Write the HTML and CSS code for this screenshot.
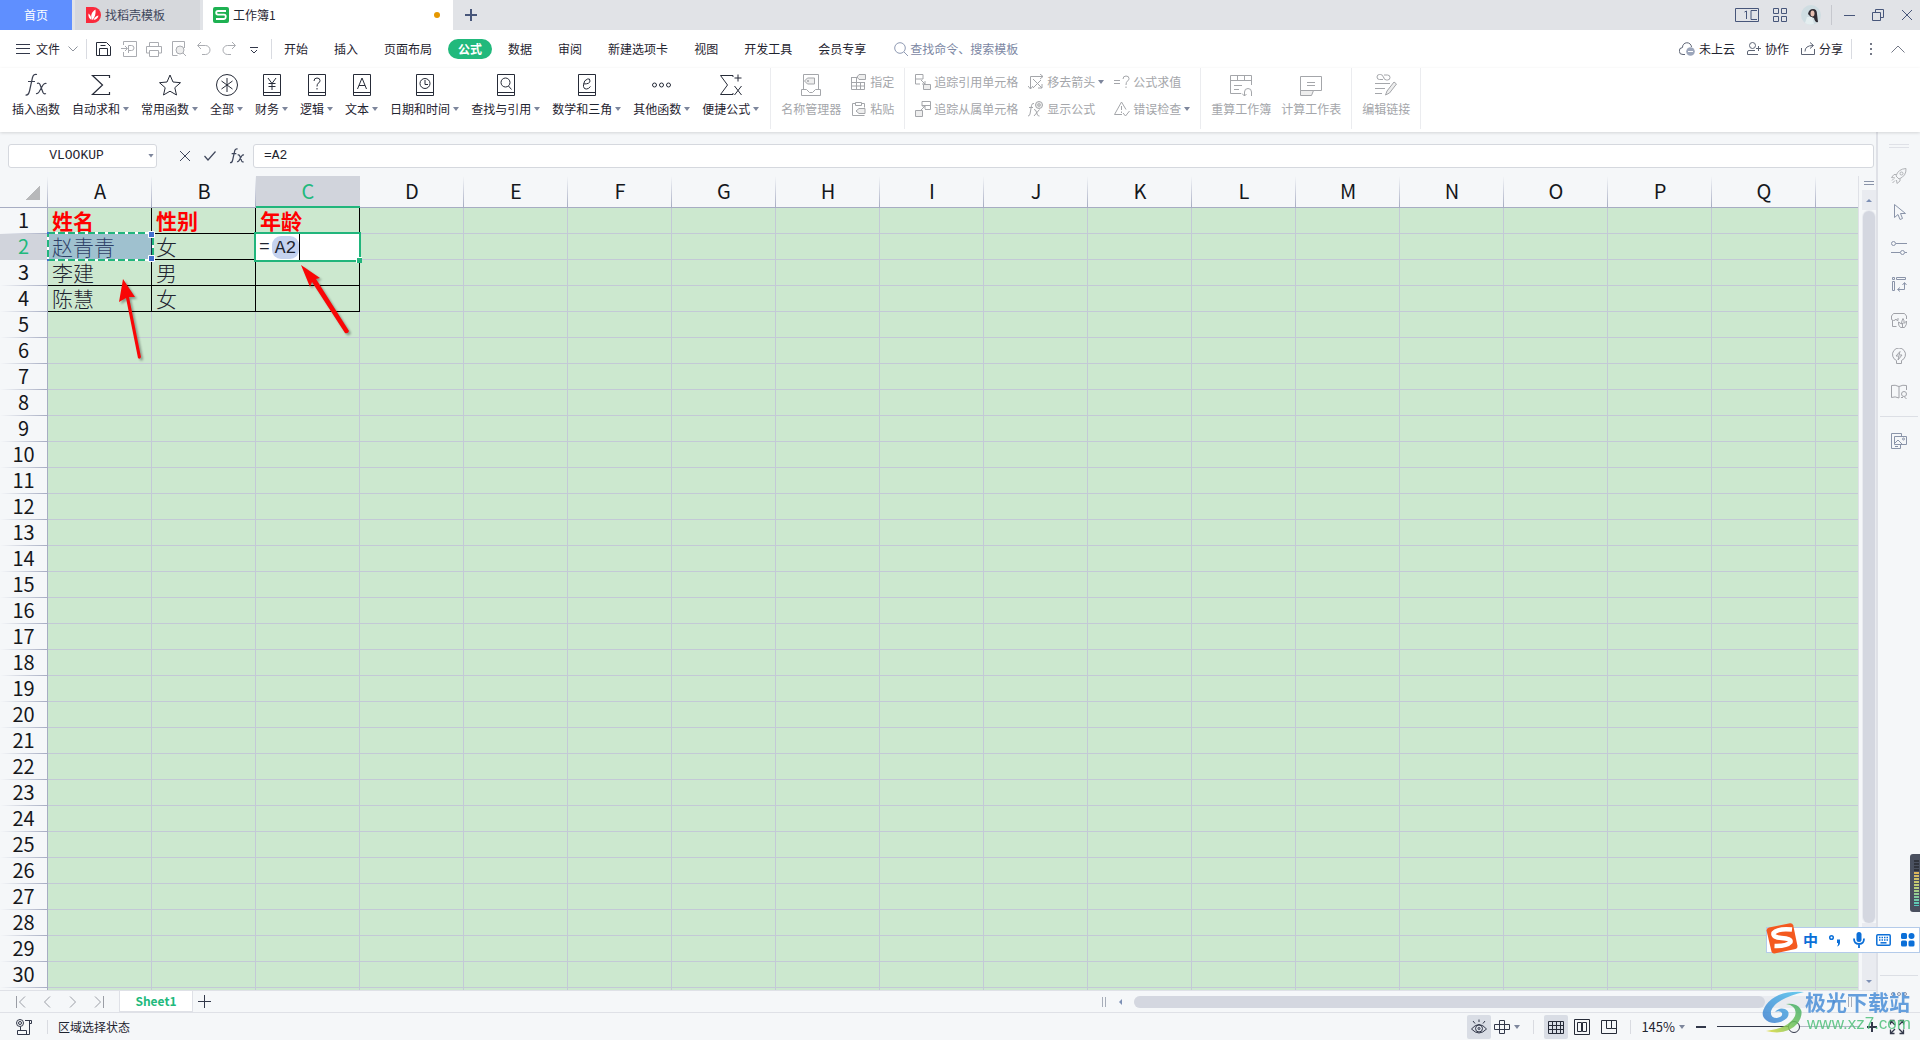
FILE: index.html
```html
<!DOCTYPE html>
<html lang="zh-CN">
<head>
<meta charset="utf-8">
<title>工作簿1</title>
<link rel="stylesheet" href="styles.css">
</head>
<body>
<header class="titlebar">
  <nav class="doc-tabs">
    <button class="doc-tab home">首页</button>
    <button class="doc-tab docer">
      <svg width="15" height="16" viewBox="0 0 15 16"><path d="M0 0h7a8 8 0 0 1 0 16H0z" fill="#fa2a3c"/><path d="M6.500 13C4 9 5.500 5 9.500 2.500 10 7 9 10 6.500 13zM5.500 13C3 11.500 2 9 2.500 6.500 4.500 8 5.500 10 5.500 13zM7.500 13c1-2.500 2.500-4 5-4.500C12 11 10.500 12.500 7.500 13z" fill="#fff"/></svg>
      找稻壳模板</button>
    <button class="doc-tab active">
      <svg width="16" height="16" viewBox="0 0 16 16"><rect width="16" height="16" rx="2" fill="#1eb152"/><path d="M13 4H5Q3.200 4 3.200 5.800T5 7.700h6q1.800 0 1.800 2T11 12H3" fill="none" stroke="#fff" stroke-width="1.800"/></svg>
      工作簿1<span class="unsaved"></span></button>
    <button class="icon-btn new-tab" aria-label="新建"><svg width="12" height="12" viewBox="0 0 12 12"><path d="M6 0v12M0 6h12" stroke="#47567a" stroke-width="2"/></svg></button>
  </nav>
  <div class="window-tools">
    <button class="icon-btn" aria-label="窗口"><svg width="24" height="14" viewBox="0 0 24 14"><path d="M15 13.500H.5V.5h23v13H15M22 2.500h-6v9h6M19 11.500h2M9.500 4l2-1v8" fill="none" stroke="#47567a"/></svg></button>
    <button class="icon-btn" aria-label="应用"><svg width="14" height="14" viewBox="0 0 14 14"><path d="M.5.5h5v5h-5zM8.500.5h5v5h-5zM.5 8.500h5v5h-5zM8.500 8.500h5v5h-5z" fill="none" stroke="#47567a"/></svg></button>
    <button class="icon-btn avatar" aria-label="账户"><svg width="20" height="20" viewBox="0 0 20 20"><circle cx="10" cy="10" r="10" fill="#cfdde2"/><path d="M7 9q1-5 5-5 4 0 4 5l1 8q-3 1-4-4l-3-1z" fill="#2e2a31"/><ellipse cx="11.500" cy="8.500" rx="2" ry="3" fill="#e6c0b2"/><path d="M6 12l5 0 2 7q-5 2-9-1z" fill="#e4eef0"/></svg></button>
    <span class="divider tall"></span>
    <button class="icon-btn" aria-label="最小化"><svg width="11" height="12" viewBox="0 0 11 12"><path d="M0 6.500h11" stroke="#47567a"/></svg></button>
    <button class="icon-btn" aria-label="还原"><svg width="12" height="12" viewBox="0 0 12 12"><path d="M.5 3.500h8v8h-8zM3.500 3V.5h8v8H9" fill="none" stroke="#47567a"/></svg></button>
    <button class="icon-btn" aria-label="关闭"><svg width="12" height="12" viewBox="0 0 12 12"><path d="M1 1l10 10M11 1L1 11" stroke="#47567a"/></svg></button>
  </div>
</header>

<div class="menubar">
  <div class="quick">
    <button class="file-btn"><svg width="14" height="12" viewBox="0 0 14 12"><path d="M0 1.500h14M0 5.500h14M0 10.500h14" stroke="#32384a"/></svg>文件
      <svg class="file-chev" width="10" height="6" viewBox="0 0 10 6"><path d="M.5.5L5 5 9.500.5" fill="none" stroke="#8e939c"/></svg></button>
    <span class="divider"></span>
    <div class="quick-icons">
      <button class="icon-btn" aria-label="保存"><svg width="16" height="16" viewBox="0 0 16 16"><path d="M.5 1.500v13h14v-9l-4-4zM3.500 14V7.500h8V14M4.500 4.500h5" fill="none" stroke="#262b38"/></svg></button>
      <button class="icon-btn" aria-label="输出PDF"><svg width="16" height="16" viewBox="0 0 16 16"><path d="M2.500 4V.5h13v15h-13V11M0 7.500h6M4 5l2.500 2.500L4 10M7.500 12V4.500h3a2.500 2.500 0 0 1 0 5h-3" fill="none" stroke="#aaacb1"/></svg></button>
      <button class="icon-btn" aria-label="打印"><svg width="16" height="16" viewBox="0 0 16 16"><path d="M3.500 5V1.500h9V5M3.500 12H.5V5.500h15V12h-3M3.500 9.500h9v6h-9z" fill="none" stroke="#aaacb1"/></svg></button>
      <button class="icon-btn" aria-label="预览"><svg width="16" height="16" viewBox="0 0 16 16"><path d="M13.500 7V.5h-12v14h5" fill="none" stroke="#aaacb1"/><circle cx="9" cy="9" r="4" fill="#eee" stroke="#aaacb1"/><path d="M12 12l3 3" stroke="#aaacb1"/></svg></button>
      <button class="icon-btn" aria-label="撤销"><svg width="16" height="16" viewBox="0 0 16 16"><path d="M5 1L1.500 4.500 5 8M2 4.500h7.500a4.500 4.500 0 0 1 0 9H6" fill="none" stroke="#aaacb1"/></svg></button>
      <button class="icon-btn" aria-label="恢复"><svg width="16" height="16" viewBox="0 0 16 16"><path d="M11 1l3.500 3.500L11 8M14 4.500H6.500a4.500 4.500 0 0 0 0 9H10" fill="none" stroke="#aaacb1"/></svg></button>
      <button class="icon-btn" aria-label="更多"><svg width="16" height="16" viewBox="0 0 16 16"><path d="M4 6.500h8M5 9l3 3 3-3" fill="none" stroke="#32384a"/></svg></button>
    </div>
    <span class="divider"></span>
  </div>
  <nav class="menus">
    <button>开始</button><button>插入</button><button>页面布局</button><button class="current">公式</button><button>数据</button><button>审阅</button><button>新建选项卡</button><button>视图</button><button>开发工具</button><button>会员专享</button>
  </nav>
  <label class="search"><svg width="14" height="14" viewBox="0 0 14 14"><circle cx="6" cy="6" r="5.300" fill="none" stroke="#8f9ab3"/><path d="M10 10l4 4" stroke="#8f9ab3"/></svg><input type="text" placeholder="查找命令、搜索模板"></label>
  <div class="account">
    <button><svg width="16" height="14" viewBox="0 0 16 14"><path d="M6 12.500H4a3.500 3.500 0 0 1-.5-7 4.500 4.500 0 0 1 9-.5" fill="none" stroke="#5d6474"/><circle cx="11.500" cy="9.500" r="4.300" fill="#9ca6bb"/><path d="M9 9.500h5" stroke="#fff"/></svg>未上云</button>
    <button><svg width="14" height="14" viewBox="0 0 14 14"><circle cx="5.500" cy="3.500" r="3" fill="none" stroke="#5d6474"/><path d="M8 8.500H2q-1.500 0-1.500 1.500v2.500H11M9 6.500h5M11.500 4v5" fill="none" stroke="#5d6474"/></svg>协作</button>
    <button><svg width="14" height="14" viewBox="0 0 14 14"><path d="M.5 6v6.500h13V7M4 9.500q0-6 8-6M9 .5l3.500 3L9 6.500" fill="none" stroke="#5d6474"/></svg>分享</button>
    <span class="divider"></span>
    <button class="icon-btn" aria-label="更多"><svg width="4" height="14" viewBox="0 0 4 14"><path d="M1 1h2v2H1zM1 6h2v2H1zM1 11h2v2H1z" fill="#747987"/></svg></button>
    <button class="icon-btn fold" aria-label="收起"><svg width="14" height="8" viewBox="0 0 14 8"><path d="M.5 7.500L7 1l6.500 6.500" fill="none" stroke="#747987"/></svg></button>
  </div>
</div>

<div class="ribbon">
  <div class="group functions">
    <button class="big"><svg width="24" height="24" viewBox="0 0 24 24"><path d="M13 1.500q-3.500-1-4.500 3L5.500 18q-1 4.500-4 4M4 8.500h7M13 10.500q2-1 3 1l3 8q1 2 3 1M22.500 10.500q-2-.5-3.500 1.500l-4 7q-1.500 2-3 1.500" fill="none" stroke="#3b4050" stroke-width="1.200"/></svg><span>插入函数</span></button>
    <button class="big"><svg width="24" height="24" viewBox="0 0 24 24"><path d="M20.500 5V2.500h-17l10 9.500-10 9.500h17V19" fill="none" stroke="#262b38" stroke-width="1.200"/></svg><span class="drop">自动求和</span></button>
    <button class="big"><svg width="24" height="24" viewBox="0 0 24 24"><path d="M12 2l3 7 7.500.7-5.700 5 1.700 7.300L12 18.200 5.500 22l1.700-7.300-5.700-5L9 9z" fill="none" stroke="#262b38"/></svg><span class="drop">常用函数</span></button>
    <button class="big"><svg width="24" height="24" viewBox="0 0 24 24"><circle cx="12" cy="12" r="10.500" fill="none" stroke="#262b38"/><path d="M12 5v14M6.500 8l11 8M17.500 8l-11 8" stroke="#262b38"/></svg><span class="drop">全部</span></button>
    <button class="big"><svg width="24" height="24" viewBox="0 0 24 24"><path d="M3.500 1.500h17v21h-17zM4 19.500h16M8 5l4 5.500L16 5M12 10v7M8.500 10.500h7M8.500 13.500h7" fill="none" stroke="#262b38"/></svg><span class="drop">财务</span></button>
    <button class="big"><svg width="24" height="24" viewBox="0 0 24 24"><path d="M3.500 1.500h17v21h-17zM4 19.500h16M9 8q0-3 3-3t3 2.500q0 1.500-1.500 2.500T12 13.500M12 15v1.500" fill="none" stroke="#262b38"/></svg><span class="drop">逻辑</span></button>
    <button class="big"><svg width="24" height="24" viewBox="0 0 24 24"><path d="M3.500 1.500h17v21h-17zM4 19.500h16M7.500 16L12 5l4.500 11M9 12.500h6" fill="none" stroke="#262b38"/></svg><span class="drop">文本</span></button>
    <button class="big"><svg width="24" height="24" viewBox="0 0 24 24"><path d="M3.500 1.500h17v21h-17zM4 19.500h16M12 7v4.500h3" fill="none" stroke="#262b38"/><circle cx="12" cy="10.500" r="5" fill="none" stroke="#262b38"/></svg><span class="drop">日期和时间</span></button>
    <button class="big"><svg width="24" height="24" viewBox="0 0 24 24"><path d="M3.500 1.500h17v21h-17zM4 19.500h16M14.500 13l3 3.500" fill="none" stroke="#262b38"/><circle cx="11.500" cy="9.500" r="4.500" fill="none" stroke="#262b38"/></svg><span class="drop">查找与引用</span></button>
    <button class="big"><svg width="24" height="24" viewBox="0 0 24 24"><path d="M3.500 1.500h17v21h-17zM4 19.500h16M8.500 11q6.500 0 6.500-3t-2.500-2q-3.500 1-4 5.500t3 4.500q2 0 4-2.500" fill="none" stroke="#262b38"/></svg><span class="drop">数学和三角</span></button>
    <button class="big"><svg width="24" height="24" viewBox="0 0 24 24"><g fill="none" stroke="#262b38"><circle cx="4.500" cy="12" r="2"/><circle cx="11.500" cy="12" r="2"/><circle cx="18.500" cy="12" r="2"/></g></svg><span class="drop">其他函数</span></button>
    <button class="big"><svg width="24" height="24" viewBox="0 0 24 24"><path d="M14 4V2.500H1.500l7 9.500-7 9.500H14V20M15.500 5h7M19 1.500v7M15.500 13l7 9M22.500 13l-7 9" fill="none" stroke="#262b38"/></svg><span class="drop">便捷公式</span></button>
  </div>
  <div class="group">
    <button class="big" disabled><svg width="24" height="24" viewBox="0 0 24 24"><path d="M4.500 16V1.500h15V16M2.500 16.500h5l3 3h3l3-3h5v6h-19z" fill="none" stroke="#a4a6aa"/><path d="M5.500 8l3-3h7v6h-7z" fill="#eee" stroke="#a4a6aa"/><circle cx="9" cy="8" r="1" fill="#a4a6aa"/></svg><span>名称管理器</span></button>
    <div class="pair">
      <button class="small" disabled><svg width="16" height="16" viewBox="0 0 16 16"><path d="M.5 3.500h6M.5 3v12.500h13V8M.5 8.500h13M.5 12h13M5.500 4v11M9.500 8v7" fill="none" stroke="#a4a6aa"/><path d="M6 3l2-2.500h6.500v5H8z" fill="#eee" stroke="#a4a6aa"/></svg>指定</button>
      <button class="small" disabled><svg width="16" height="16" viewBox="0 0 16 16"><path d="M4.500 2.500h-3v12h12M10.500 2.500h3v4M4.500 1.500h6v3h-6z" fill="none" stroke="#a4a6aa"/><path d="M5 10l3-2.500h6v5H8z" fill="#eee" stroke="#a4a6aa"/></svg>粘贴</button>
    </div>
  </div>
  <div class="group">
    <div class="pair">
      <button class="small" disabled><svg width="16" height="16" viewBox="0 0 16 16"><path d="M8 5V.5H.5V10H5M.5 5H8M6 6l4 4M7 10h3V7" fill="none" stroke="#a4a6aa"/><path d="M8.500 10.500h7v5h-7z" fill="#eee" stroke="#a4a6aa"/></svg>追踪引用单元格</button>
      <button class="small" disabled><svg width="16" height="16" viewBox="0 0 16 16"><path d="M7 5V.5h8.500v8H10M7 4.500h8M5 10l5-5M7 5h3v3" fill="none" stroke="#a4a6aa"/><path d="M.5 9.500h7v6h-7z" fill="#eee" stroke="#a4a6aa"/></svg>追踪从属单元格</button>
    </div>
    <div class="pair">
      <button class="small" disabled><svg width="16" height="16" viewBox="0 0 16 16"><path d="M2.500 15V2.500H15M12 0l3 2.500L12 5M0 12l2.500 3L5 12M5 5l9 9M13 6l-8 8M14 10v4h-4" fill="none" stroke="#a4a6aa"/></svg><span class="drop">移去箭头</span></button>
      <button class="small" disabled><svg width="16" height="16" viewBox="0 0 16 16"><path d="M6 2.500Q4 2 3.500 4.500L2 13q-.5 2-2 2M1 6.500h4M6 8.500q1.500 0 2 1.500l1.500 4q.5 1 2 1M11.500 8.500L6 15" fill="none" stroke="#a4a6aa"/><circle cx="11" cy="4" r="3.500" fill="#eee" stroke="#a4a6aa"/><circle cx="11" cy="4" r="1.300" fill="none" stroke="#a4a6aa"/></svg>显示公式</button>
    </div>
    <div class="pair">
      <button class="small" disabled><svg width="16" height="16" viewBox="0 0 16 16"><path d="M0 6.500h6M0 9.500h6M9 5q0-3 3-3t3 2.500Q15 6 13.500 7T12 11M12 12.500V14" fill="none" stroke="#a4a6aa"/></svg>公式求值</button>
      <button class="small" disabled><svg width="16" height="16" viewBox="0 0 16 16"><path d="M12 8.500L7.500 1 .5 13.500H8M7.500 5v4M7.500 10.500V12M9 12l2.500 3 4-5" fill="none" stroke="#a4a6aa"/></svg><span class="drop">错误检查</span></button>
    </div>
  </div>
  <div class="group">
    <button class="big" disabled><svg width="24" height="24" viewBox="0 0 24 24"><path d="M12 20.500H1.500v-18h21V12M1.500 7.500h21M8.500 3v4M15.500 3v4M5 12.500h8M5 16.500h5M15.500 23v-4a3.500 3.500 0 0 1 7 0v4M13 20.500l2.500 2.500 2-2" fill="none" stroke="#a4a6aa"/></svg><span>重算工作簿</span></button>
    <button class="big" disabled><svg width="24" height="24" viewBox="0 0 24 24"><path d="M1.500 3.500h21v14H13M1.500 18V3.500M8 9.500h8M8 12.500h8" fill="none" stroke="#a4a6aa"/><path d="M1.500 17.500h13l-2 5h-11z" fill="#eee" stroke="#a4a6aa"/></svg><span>计算工作表</span></button>
  </div>
  <div class="group last">
    <button class="big" disabled><svg width="24" height="24" viewBox="0 0 24 24"><g fill="none" stroke="#a4a6aa"><path d="M9 6.500H5.500a2.500 2.500 0 0 1 0-5h1q2.500 0 3 3M10 2h3.500a2.500 2.500 0 0 1 0 5h-1q-2.500 0-3-3M1 10.500h15M1 15.500h10M1 20.500h7"/><path d="M13 18l7-9 2.500 2-7 9-4 2z" fill="#eee"/></g></svg><span>编辑链接</span></button>
  </div>
</div>

<main class="workspace">
  <section class="editor">
    <div class="formula-bar">
      <div class="name-box"><input type="text" value="VLOOKUP" aria-label="名称框"><button class="caret-btn" aria-label="展开"></button></div>
      <div class="formula-tools">
        <button class="icon-btn" aria-label="取消"><svg width="12" height="12" viewBox="0 0 12 12"><path d="M1 1l10 10M11 1L1 11" stroke="#3f475c"/></svg></button>
        <button class="icon-btn" aria-label="输入"><svg width="12" height="10" viewBox="0 0 12 10"><path d="M.5 5l3.500 4L11.500.5" fill="none" stroke="#3f475c" stroke-width="1.200"/></svg></button>
        <button class="icon-btn" aria-label="插入函数"><svg width="16" height="16" viewBox="0 0 24 24"><path d="M13 1.500q-3.500-1-4.500 3L5.500 18q-1 4.500-4 4M4 8.500h7M13 10.500q2-1 3 1l3 8q1 2 3 1M22.500 10.500q-2-.5-3.500 1.500l-4 7q-1.500 2-3 1.500" fill="none" stroke="#3f475c" stroke-width="1.800"/></svg></button>
      </div>
      <input class="formula-input" type="text" value="=A2" aria-label="编辑栏">
    </div>
    <div class="sheet-area">
      <div class="grid">
        <table class="sheet" id="sheet"></table>
        <div class="ref-range"><svg width="107" height="29" viewBox="0 0 107 29"><rect x="1" y="1" width="105" height="27" fill="none" stroke="#fff" stroke-width="2"/><rect x="1" y="1" width="105" height="27" fill="none" stroke="#21b57c" stroke-width="2" stroke-dasharray="7 3"/><path d="M0 0h2v2H0zM0 27h2v2H0z" fill="#4471d0"/><path d="M101.500-.5h6v6h-6zM101.500 23.500h6v6h-6z" fill="#4471d0" stroke="#fff"/></svg></div>
        <div class="edit-cell">=<span class="ref">A2</span><span class="cursor"></span></div>
        <svg class="arrow arrow-left" width="36" height="90" viewBox="0 0 36 90"><path d="M9 4L21 22 15 22 27 82Q26 85 24 83L12 23 5 27z" fill="#f90606"/></svg>
        <svg class="arrow arrow-right" width="56" height="76" viewBox="0 0 56 76"><path d="M3 3L22 16 18 17 51 69Q50 72 47 71L14 20 12 25z" fill="#f90606"/></svg>
      </div>
      <div class="vscroll"><span class="split"></span><button class="sb-btn up" aria-label="上"></button><span class="thumb"></span><button class="sb-btn down" aria-label="下"></button></div>
    </div>
    <div class="sheet-tabs">
      <div class="sheet-nav">
        <button class="icon-btn" aria-label="第一张"><svg width="10" height="12" viewBox="0 0 10 12"><path d="M.5 0v12M9 .5L3.500 6 9 11.500" fill="none" stroke="#9a9da5"/></svg></button>
        <button class="icon-btn" aria-label="上一张"><svg width="10" height="12" viewBox="0 0 10 12"><path d="M8 .5L2.500 6 8 11.500" fill="none" stroke="#9a9da5"/></svg></button>
        <button class="icon-btn" aria-label="下一张"><svg width="10" height="12" viewBox="0 0 10 12"><path d="M2 .5L7.500 6 2 11.500" fill="none" stroke="#9a9da5"/></svg></button>
        <button class="icon-btn" aria-label="最后一张"><svg width="10" height="12" viewBox="0 0 10 12"><path d="M9.500 0v12M1 .5L6.500 6 1 11.500" fill="none" stroke="#9a9da5"/></svg></button>
      </div>
      <button class="sheet-tab">Sheet1</button>
      <button class="icon-btn add-sheet" aria-label="新建工作表"><svg width="13" height="13" viewBox="0 0 13 13"><path d="M6.500 0v13M0 6.500h13" stroke="#32384a"/></svg></button>
      <div class="hscroll"><span class="grip"></span><button class="sb-btn left" aria-label="左"></button><span class="track"><span class="thumb"></span></span><button class="sb-btn right" aria-label="右"></button><span class="grip"></span></div>
    </div>
  </section>
  <aside class="side">
    <span class="side-grip"></span>
    <button class="icon-btn" aria-label="推荐"><svg width="16" height="16" viewBox="0 0 16 16"><path d="M5 8q2-7 10-7.500Q15.500 8 8 11zM5.500 6.500H3L.5 9.500l3.500.5M9 10.500V13l-3 2.500-.5-3.500M1 12.500l1.500-1.500M1.500 15L4 12.500" fill="none" stroke="#b0b2b6"/><circle cx="10.500" cy="5.500" r="1.500" fill="none" stroke="#b0b2b6"/></svg></button>
    <button class="icon-btn" aria-label="选择"><svg width="16" height="16" viewBox="0 0 16 16"><path d="M3.500.5v13l3.500-3 2 5 2.500-1-2-5h5z" fill="none" stroke="#8a94a9"/></svg></button>
    <button class="icon-btn" aria-label="属性"><svg width="16" height="16" viewBox="0 0 16 16"><path d="M5 3.500h11M0 12.500h9M14 12.500h2" stroke="#8a94a9"/><circle cx="2.500" cy="3.500" r="2" fill="none" stroke="#8a94a9"/><circle cx="11.500" cy="12.500" r="2" fill="none" stroke="#8a94a9"/></svg></button>
    <button class="icon-btn" aria-label="行列"><svg width="16" height="16" viewBox="0 0 16 16"><path d="M1.500 1.500h2v2h-2zM5.500 1.500h9v2h-9zM1.500 5.500h2v9h-2zM13.500 7v6.500H7M11.500 9l2-2.500 2 2.500M9 11.500l-2.500 2L9 15.500" fill="none" stroke="#8a94a9"/></svg></button>
    <button class="icon-btn" aria-label="商城"><svg width="16" height="16" viewBox="0 0 16 16"><path d="M15.500 7V4l-2-2.500h-11L.5 4v3q0 1.500 2 1.500T5 7q0 1.500 2 1.500M7 8.500V6M1.500 8.500v6h4" fill="none" stroke="#a0a2a8"/><path d="M7.500 10l3 2q0-3 1.500-5.500 1.500 2 1 5l2.500-2.500q.5 4-2 6.500H9.500Q7 13.500 7.500 10zM11.500 15v-4" fill="none" stroke="#a0a2a8"/></svg></button>
    <button class="icon-btn" aria-label="灵感"><svg width="16" height="16" viewBox="0 0 16 16"><path d="M5.500 12.500a6.500 6.500 0 1 1 5 0v3h-5zM9 3.500L5 8h3l-1 4L11 7H8z" fill="none" stroke="#a0a2a8"/></svg></button>
    <button class="icon-btn" aria-label="学习"><svg width="16" height="16" viewBox="0 0 16 16"><path d="M8 14q-4-2-7.500-.5v-12Q4 .5 8 2.500q4-2 7.500-1V6M8 2.500V14M10 13.500h2M15.500 15l-2-2" fill="none" stroke="#a0a2a8"/><circle cx="13" cy="10" r="2.500" fill="none" stroke="#a0a2a8"/></svg></button>
    <span class="side-line"></span>
    <button class="icon-btn" aria-label="图片"><svg width="16" height="16" viewBox="0 0 16 16"><path d="M10.500 3V.5h-10v15h9V12M3.500 3.500h12v8h-12zM4 10l3-3 4 4M4 13.500h3" fill="none" stroke="#8a94a9"/><circle cx="12.500" cy="6" r="1" fill="none" stroke="#8a94a9"/></svg></button>
    <span class="side-line lower"></span>
    <button class="icon-btn dots" aria-label="更多"><svg width="16" height="4" viewBox="0 0 16 4"><g fill="none" stroke="#8a94a9"><circle cx="2" cy="2" r="1.500"/><circle cx="8" cy="2" r="1.500"/><circle cx="14" cy="2" r="1.500"/></g></svg></button>
  </aside>
</main>

<footer class="status">
  <button class="icon-btn macro" aria-label="录制"><svg width="16" height="16" viewBox="0 0 16 16"><circle cx="4" cy="4" r="3.500" fill="none" stroke="#32384a"/><circle cx="4" cy="4" r="1.500" fill="none" stroke="#32384a"/><path d="M9 1.500h6.500v3h-2M13.500 2v13.500h-12v-4h9v4M4.500 8v3" fill="none" stroke="#32384a"/></svg></button>
  <span class="divider"></span>
  <span class="status-text">区域选择状态</span>
  <div class="view-tools">
    <button class="icon-btn on" aria-label="护眼模式"><svg width="16" height="16" viewBox="0 0 16 16"><path d="M.5 10Q8 1 15.500 10 8 18 .5 10zM8 .5V3M2 2l2 2.500M14 2l-2 2.500" fill="none" stroke="#32384a"/><circle cx="8" cy="9.500" r="3.500" fill="none" stroke="#32384a"/><circle cx="8" cy="9.500" r="1" fill="none" stroke="#32384a"/></svg></button>
    <button class="icon-btn drop" aria-label="阅读模式"><svg width="16" height="16" viewBox="0 0 16 16"><path d="M5.500 1.500h5v13h-5zM.5 5.500h15v5H.5z" fill="none" stroke="#32384a"/></svg></button>
    <span class="divider"></span>
    <button class="icon-btn on" aria-label="普通视图"><svg width="16" height="16" viewBox="0 0 16 16"><path d="M.5 2.500h15v12H.5zM.5 6.500h15M.5 10.500h15M4.500 2.500v12M8.500 2.500v12M12.500 2.500v12" fill="none" stroke="#262b38"/></svg></button>
    <button class="icon-btn page" aria-label="页面布局"><svg width="16" height="16" viewBox="0 0 16 16"><path d="M.5.5h15v15H.5zM3.500 3.500h4v9h-4zM8.500 3.500h4v9h-4z" fill="none" stroke="#262b38"/></svg></button>
    <button class="icon-btn" aria-label="分页预览"><svg width="16" height="16" viewBox="0 0 16 16"><path d="M.5 1.500h15v13H.5zM5.500 2v7.500h5V2M10.500 9.500H15" fill="none" stroke="#262b38"/></svg></button>
    <span class="divider"></span>
    <button class="zoom-value drop">145%</button>
    <button class="icon-btn" aria-label="缩小"><svg width="10" height="10" viewBox="0 0 10 10"><path d="M0 5h10" stroke="#32384a" stroke-width="2"/></svg></button>
    <input class="zoom-range" type="range" min="0" max="100" value="54" aria-label="缩放">
    <button class="icon-btn" aria-label="放大"><svg width="10" height="10" viewBox="0 0 10 10"><path d="M0 5h10M5 0v10" stroke="#32384a" stroke-width="2"/></svg></button>
    <button class="icon-btn full" aria-label="全屏"><svg width="16" height="16" viewBox="0 0 16 16"><path d="M1.500 5.500v-4h4M10.500 1.500h4v4M14.500 10.500v4h-4M5.500 14.500h-4v-4M2 2l4 4M14 2l-4 4M14 14l-4-4M2 14l4-4" fill="none" stroke="#32384a" stroke-width="1.300"/></svg></button>
  </div>
</footer>

<div class="meter"><span></span></div>
<div class="ime">
  <svg class="ime-logo" width="32" height="31" viewBox="0 0 32 31"><path d="M3 4.500L24 .3q2.500-.3 3.200 2L31.500 23q.3 2.300-2 3L8.500 30.500q-2.300.3-3-2L.5 7.500q0-2.500 2.500-3z" fill="#f4591f"/><path d="M26 6.500Q12 5 7.500 10q-1 4.500 8 5 10 .5 9 4-4 4.500-16 4" fill="none" stroke="#fff" stroke-width="4.500"/></svg>
  <button>中</button>
  <button class="icon-btn" aria-label="标点"><svg width="14" height="14" viewBox="0 0 14 14"><circle cx="3.500" cy="4.500" r="1.800" fill="none" stroke="#0b6fd8" stroke-width="1.500"/><path d="M9 6.500h3v3q0 3-3 4 1.500-2 1-3.500H9z" fill="#0b6fd8"/></svg></button>
  <button class="icon-btn" aria-label="语音"><svg width="14" height="16" viewBox="0 0 14 16"><rect x="4.500" y="0" width="5" height="10" rx="2.500" fill="#0b6fd8"/><path d="M2 6.500q0 5.500 5 5.500t5-5.500M7 12v4" fill="none" stroke="#0b6fd8" stroke-width="1.800"/></svg></button>
  <button class="icon-btn" aria-label="键盘"><svg width="15" height="12" viewBox="0 0 15 12"><rect x=".8" y=".8" width="13.400" height="10.400" rx="1" fill="none" stroke="#0b6fd8" stroke-width="1.500"/><path d="M3 3.500h9M3 6h9" stroke="#0b6fd8" stroke-width="1.500" stroke-dasharray="1.500 1"/><path d="M4.500 8.800h6" stroke="#0b6fd8" stroke-width="1.500"/></svg></button>
  <button class="icon-btn" aria-label="工具箱"><svg width="14" height="14" viewBox="0 0 14 14"><g fill="#0b6fd8"><rect width="6" height="6" rx="1.500"/><circle cx="10.500" cy="3" r="3"/><rect y="7.500" width="6" height="6" rx="1.500"/><rect x="7.500" y="7.500" width="6" height="6" rx="1.500"/></g></svg></button>
</div>
<div class="watermark">
  <svg width="44" height="42" viewBox="0 0 44 42"><defs><linearGradient id="wmBlue" x1="0" y1="1" x2="1" y2="0"><stop offset="0" stop-color="#3f7fcf"/><stop offset="1" stop-color="#4fc4ee"/></linearGradient><linearGradient id="wmGreen" x1="0" y1="1" x2="1" y2="0"><stop offset="0" stop-color="#e6dc3c"/><stop offset=".5" stop-color="#6fc25a"/><stop offset="1" stop-color="#41ad6a"/></linearGradient></defs><path d="M43 1Q16-1 5 14q-8 12 3 17 10 3 18-4 4-6-2-9-6-2-10 3 5-2 7 1 1 4-5 5-7 0-6-7Q14 8 43 1z" fill="url(#wmBlue)"/><path d="M25 13q12 2 9 12Q28 37 5 40q21 5 32-8 8-13-2-18-5-2-10-1z" fill="url(#wmGreen)"/></svg>
  <div><div class="wm-name">极光下载站</div><div class="wm-url">www.xz7.com</div></div>
</div>
<script src="sheet.js"></script>
</body>
</html>
```
FILE: sheet.js
```js
const columns = ["A","B","C","D","E","F","G","H","I","J","K","L","M","N","O","P","Q",""];
const data = [["姓名", "性别", "年龄"], ["赵青青", "女", ""], ["李建", "男", ""], ["陈慧", "女", ""]];
const rowCount = 30;
const table = document.getElementById("sheet");

const head = table.createTHead().insertRow();
const corner = document.createElement("th");
corner.className = "corner";
head.append(corner);
columns.forEach((name) => {
  const th = document.createElement("th");
  th.scope = "col";
  th.textContent = name;
  if (name === "C") th.className = "current";
  head.append(th);
});

// The row after the last numbered one is only partly visible and stays blank.
const body = table.createTBody();
for (let r = 0; r <= rowCount; r++) {
  const row = body.insertRow();
  const th = document.createElement("th");
  th.scope = "row";
  if (r < rowCount) th.textContent = r + 1;
  if (r === 1) th.className = "current";
  row.append(th);
  columns.forEach((name, c) => {
    const td = row.insertCell();
    if (r < data.length && c < 3) {
      td.textContent = data[r][c];
      td.className = r === 0 ? "boxed title" : "boxed";
    }
  });
}
```
FILE: styles.css
```css
* { box-sizing: border-box; }
body {
  margin: 0;
  height: 100vh;
  display: flex;
  flex-direction: column;
  overflow: hidden;
  background: #f5f7f9;
  color: #1f2430;
  font: 12px/16px "Noto Sans CJK SC", sans-serif;
}
button, input { font: inherit; color: inherit; margin: 0; padding: 0; border: 0; background: none; outline: 0; }
button { white-space: nowrap; }
svg { display: block; flex: none; }
.icon-btn { display: flex; align-items: center; justify-content: center; flex: none; }
.divider { flex: none; width: 1px; height: 20px; background: #d9dbe1; }

/* title bar */
.titlebar { flex: none; display: flex; justify-content: space-between; height: 30px; background: #e1e3e7; }
.doc-tabs { display: flex; gap: 3px; }
.doc-tab { display: flex; align-items: center; height: 30px; }
.home { width: 72px; justify-content: center; background: #5f8fff; color: #fff; }
.docer { width: 125px; padding-left: 11px; gap: 4px; background: #d6d8dc; color: #3f475c; }
.active { width: 250px; padding: 0 13px 0 10px; gap: 4px; background: #fff; }
.unsaved { width: 6px; height: 6px; margin-left: auto; border-radius: 3px; background: #e59700; }
.new-tab { width: 30px; }
.window-tools { display: flex; align-items: center; gap: 14px; padding-right: 7px; }
.window-tools .divider { background: #c6c8ce; margin: 0 -2px 0 -4px; }
.window-tools .icon-btn:nth-last-child(-n+2) { margin-left: 3px; }

/* menu bar */
.menubar { flex: none; display: flex; align-items: center; height: 38px; background: #fff; padding: 0 15px 0 16px; }
.quick, .quick-icons, .menus, .account, .account button, .file-btn, .search { display: flex; align-items: center; }
.file-btn { gap: 6px; margin-right: 8px; }
.file-chev { margin-left: 2px; }
.quick-icons { gap: 9px; padding: 0 9px; }
.menus { margin-left: 2px; }
.menus button { height: 20px; padding: 0 10px; margin-right: 6px; border-radius: 10px; }
.menus .current { background: #21b97c; color: #fff; font-weight: 700; }
.search { gap: 2px; margin-left: 12px; color: #7c87a3; }
.search input { width: 140px; }
.search input::placeholder { color: #7c87a3; opacity: 1; }
.account { margin-left: auto; gap: 12px; }
.account button { gap: 4px; }
.account .divider { margin: 0 5px 0 -4px; }
.account .fold { margin-left: 6px; }

/* ribbon */
.ribbon { flex: none; display: flex; height: 64px; background: #fff; padding-left: 12px; box-shadow: 0 1px 3px #0002; position: relative; }
.group { display: flex; gap: 10px; height: 61px; padding: 5px 10px 0 10px; border-right: 1px solid #ebecef; }
.functions { gap: 12px; padding: 5px 11px 0 0; }
.big { display: flex; flex-direction: column; align-items: center; gap: 4px; height: 44px; }
.pair { display: flex; flex-direction: column; gap: 11px; padding-top: 1px; }
.small { display: flex; align-items: center; gap: 3px; height: 16px; }
button:disabled { color: #a4a6aa; }
.drop { display: flex; align-items: center; gap: 3px; }
.drop::after { content: ""; border: 3px solid transparent; border-top: 4px solid #7d869c; border-bottom: 0; }

/* formula bar */
.workspace { flex: 1; min-height: 0; display: flex; }
.editor { flex: 1; min-width: 0; display: flex; flex-direction: column; }
.formula-bar { flex: none; display: flex; align-items: center; height: 44px; padding: 3px 2px 0 8px; }
.name-box { display: flex; align-items: center; width: 149px; height: 24px; border: 1px solid #d5d8de; border-radius: 3px; background: #fff; }
.name-box input { flex: 1; min-width: 0; padding-right: 4px; text-align: center; font: 13px/16px "Liberation Mono", monospace; }
.caret-btn { width: 6px; height: 4px; margin-right: 2px; background: #7d869c; clip-path: polygon(0 0, 100% 0, 50% 100%); }
.formula-tools { display: flex; align-items: center; gap: 13px; padding: 0 8px 0 22px; }
.formula-input { flex: 1; height: 24px; padding: 0 10px; border: 1px solid #d5d8de; border-radius: 3px; background: #fff; font: 13px/16px "Liberation Mono", monospace; }

/* sheet */
.sheet-area { flex: 1; min-height: 0; display: flex; }
.grid { flex: 1; min-width: 0; position: relative; overflow: hidden; }
.sheet { width: 1920px; table-layout: fixed; border-collapse: separate; border-spacing: 0; background: #cce8cf; }
.sheet th, .sheet td { padding: 0; height: 26px; white-space: nowrap; border-bottom: 1px solid #c3c9d6; border-right: 1px solid #c3c9d6; }
.sheet th { padding-bottom: 2px; background: #f5f7f9; font-size: 20px; line-height: 23px; font-weight: 400; color: #15171c; }
.sheet thead th { width: 104px; height: 32px; border-right: 0; border-bottom-color: #a7adc3; background: linear-gradient(#f5f7f9, #a7adc3) right / 1px 100% no-repeat #f5f7f9; }
.sheet thead .corner { width: 48px; background: linear-gradient(135deg, transparent 50%, #b7b8ba 50%) 25px 9px / 15px 15px no-repeat, linear-gradient(#f5f7f9, #a7adc3) right / 1px 100% no-repeat #f5f7f9; }
.sheet tbody th { border-right-color: #a7adc3; border-bottom: 0; padding-bottom: 3px; background: linear-gradient(90deg, #f5f7f9, #a7adc3) bottom / 100% 1px no-repeat #f5f7f9; }
.sheet thead .current { background: #d1d4dc; color: #21b97c; border-bottom: 2px solid #21b57c; }
.sheet tbody .current { background: #d1d4dc; color: #21b97c; }
.sheet td { padding-left: 4px; font-size: 21px; line-height: 25px; font-weight: 300; }
.sheet .boxed { border-color: #000; }
.sheet .title { color: #f00; font-weight: 700; }
.ref-range { position: absolute; left: 47px; top: 56px; background: #4b79cf59; }
.ref-range svg { overflow: visible; }
.edit-cell { position: absolute; left: 254px; top: 56px; width: 107px; height: 30px; padding-left: 3px; display: flex; align-items: center; border: 2px solid #21b57c; background: #fff; font: 18px/22px "Liberation Mono", monospace; }
.edit-cell::after { content: ""; position: absolute; right: -3px; bottom: -3px; width: 5px; height: 5px; background: #21b57c; border: solid #fff; border-width: 1px 0 0 1px; }
.ref { padding: 1px 3px 0; margin-left: 2px; border-radius: 9px; background: #c5d2ef; }
.cursor { width: 1px; height: 26px; background: #000; }
.arrow { position: absolute; filter: drop-shadow(2px 2px 1px #0005); }
.arrow-left { left: 114px; top: 99px; }
.arrow-right { left: 298px; top: 86px; }

/* scroll bars */
.vscroll { flex: none; width: 18px; display: flex; flex-direction: column; align-items: center; padding-left: 2px; border-left: 1px solid #dfe1e7; background: #f5f7f9; }
.split { width: 10px; height: 4px; margin: 5px 0; border: solid #8a94a9; border-width: 1px 0; }
.sb-btn { flex: none; width: 14px; height: 20px; background: #e9ebf0; display: flex; align-items: center; justify-content: center; }
.sb-btn::before { content: ""; border: 3px solid transparent; }
.up::before { border-bottom-color: #7d90b5; border-top: 0; }
.down::before { border-top-color: #7d90b5; border-bottom: 0; }
.left::before { border-right-color: #7d90b5; border-left: 0; }
.right::before { border-left-color: #7d90b5; border-right: 0; }
.thumb { background: #d4d7e0; border-radius: 6px; }
.vscroll .thumb { width: 12px; flex: 1; margin-top: 1px; box-shadow: 0 0 0 1px #e9ebf0; }
.down { height: 67px; align-items: flex-end; padding-bottom: 7px; }
.sheet-tabs { flex: none; display: flex; height: 23px; border-top: 1px solid #dfe1e7; border-bottom: 1px solid #dfe1e7; }
.sheet-nav { display: flex; gap: 16px; width: 119px; padding-left: 16px; }
.sheet-tab { width: 74px; border: solid #dfe1e7; border-width: 0 1px 1px; background: #fff; color: #21b97c; font-weight: 700; }
.add-sheet { width: 22px; }
.hscroll { display: flex; align-items: center; margin-left: auto; width: 774px; max-width: 45%; gap: 8px; padding-right: 24px; }
.hscroll .sb-btn { width: 12px; height: 14px; background: none; }
.grip { flex: none; width: 4px; height: 10px; border: solid #a7adb9; border-width: 0 1px; }
.track { flex: 1; height: 12px; border-radius: 6px; background: #e9ebf0; }
.track .thumb { display: block; width: 92%; height: 12px; }

/* side panel */
.side { flex: none; width: 44px; display: flex; flex-direction: column; align-items: center; gap: 20px; padding: 12px 0 16px; border-left: 2px solid #dfe1e7; border-bottom: 1px solid #dfe1e7; }
.side-grip { width: 20px; height: 4px; border: solid #dfe1e7; border-width: 1px 0; }
.side-line { flex: none; width: 38px; height: 1px; margin: -4px 0; background: #dcdfe5; }
.lower { margin-top: auto; }

/* status bar */
.status { flex: none; display: flex; align-items: center; height: 27px; padding: 0 15px 0 16px; }
.status .divider { height: 14px; margin-left: 15px; }
.status-text { margin-left: 10px; }
.view-tools { display: flex; align-items: center; margin-left: auto; gap: 3px; }
.view-tools .on { width: 24px; height: 24px; border-radius: 2px; background: #d9dde5; }
.view-tools .drop { gap: 4px; }
.view-tools .divider { margin: 0 7px 0 10px; }
.page { margin: 0 8px 0 3px; }
.zoom-value { font-size: 13px; margin-right: 8px; }
.zoom-range { appearance: none; width: 143px; height: 16px; margin: 0 4px 0 8px; background: linear-gradient(90deg, #32384a 54%, #b4b9c5 54%) center / 100% 1px no-repeat; }
.zoom-range::-webkit-slider-thumb { appearance: none; width: 12px; height: 12px; border: 1px solid #32384a; border-radius: 6px; background: #f5f7f9; }
.full { margin-left: 9px; }

/* floating overlays */
.meter { position: fixed; right: 0; bottom: 128px; width: 10px; height: 58px; padding: 6px 1px 6px 4px; border-radius: 3px 0 0 3px; background: #4a505f; }
.meter span { display: block; height: 100%; background: repeating-linear-gradient(transparent 0 2px, #4a505f 2px 3px), linear-gradient(#30333c 25%, #e2b458 25%, #b9d07a 60%, #4fc9c0); }
.ime { position: fixed; right: 0; bottom: 87px; height: 26px; display: flex; align-items: center; gap: 10px; padding: 0 4px 0 36px; border: 1px solid #b4cbea; background: #fff; color: #0b6fd8; }
.ime button:not(.icon-btn) { font-size: 15px; font-weight: 700; }
.ime-logo { position: absolute; left: -1px; top: -5px; }
.watermark { position: fixed; right: 9px; bottom: 7px; display: flex; opacity: .85; pointer-events: none; font-family: "Liberation Sans", "Noto Sans CJK SC", sans-serif; }
.wm-name { font-size: 21px; line-height: 24px; font-weight: 700; color: #4a8fd8; }
.wm-url { padding-left: 2px; font-size: 17px; line-height: 18px; color: #4fc07a; }
```
